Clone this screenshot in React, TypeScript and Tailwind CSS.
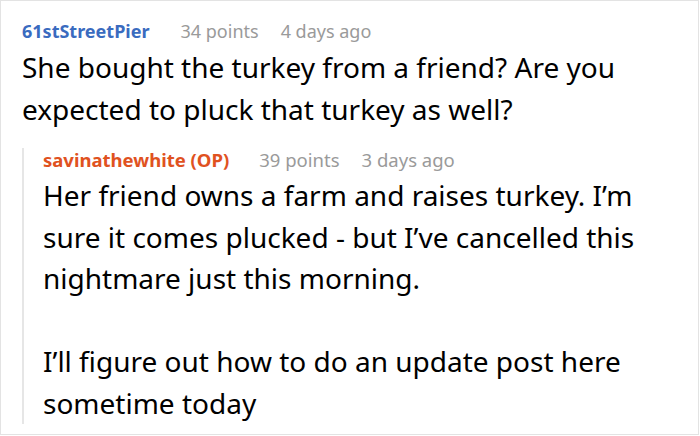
export default function App() {
  return (
    <div className="h-[436px] w-[700px] overflow-hidden bg-white">
      <div
        className="h-[435px] w-[699px] border border-[#e3e3e3] pl-[21px] pt-[18px] text-black"
        style={{ fontFamily: '"Noto Sans", "Open Sans", sans-serif' }}
      >
        <div className="flex items-center gap-[31px] text-[18px] leading-[24px]">
          <span className="font-bold text-[#3a6bbf]">61stStreetPier</span>
          <span className="flex gap-[22px] text-[#9a9a9a]">
            <span>34 points</span>
            <span>4 days ago</span>
          </span>
        </div>
        <p className="mt-[3px] w-[640px] text-[28px] leading-[42px]">
          She bought the turkey from a friend? Are you expected to pluck that turkey as well?
        </p>
        <div className="mt-[18px] border-l-2 border-[#e6e6e6] pl-[19px]">
          <div className="flex items-center gap-[30px] text-[18.5px] leading-[24px]">
            <span className="font-bold text-[#e0521f]">savinathewhite (OP)</span>
            <span className="flex gap-[22px] text-[#9a9a9a]">
              <span>39 points</span>
              <span>3 days ago</span>
            </span>
          </div>
          <div className="mt-[3px] w-[640px] text-[28px] leading-[41.5px]">
            <p>
              Her friend owns a farm and raises turkey. I’m sure it comes plucked - but I’ve cancelled this
              nightmare just this morning.
            </p>
            <p className="h-[41.5px]" />
            <p>I’ll figure out how to do an update post here sometime today</p>
          </div>
        </div>
      </div>
    </div>
  );
}
